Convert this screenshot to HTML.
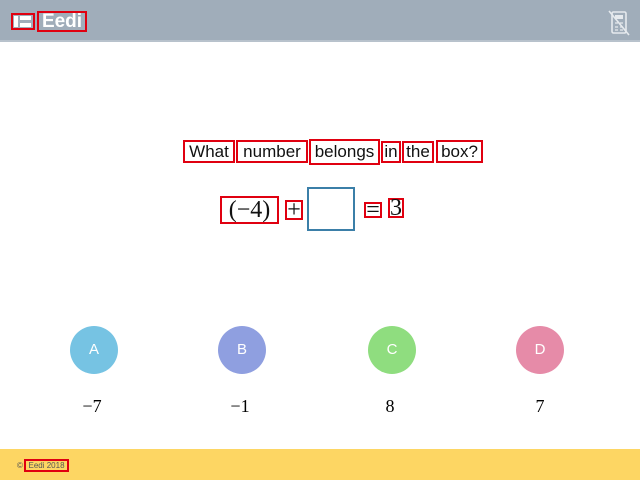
<!DOCTYPE html>
<html><head><meta charset="utf-8"><style>
*{margin:0;padding:0;box-sizing:border-box}
body{width:640px;height:480px;position:relative;background:#fff;overflow:hidden;font-family:"Liberation Sans",sans-serif}
.a{position:absolute}
.r{position:absolute;border:2px solid #e00010;display:flex;align-items:center;justify-content:center;white-space:nowrap;color:#111}
.q{font-family:"Liberation Sans",sans-serif;font-size:17px}
.m{font-family:"Liberation Serif",serif;font-size:24px}
.c{position:absolute;width:48px;height:48px;border-radius:50%;color:#fff;font-size:15px;text-align:center;line-height:48px}
.n{position:absolute;font-family:"Liberation Serif",serif;font-size:18px;width:60px;text-align:center;top:396px}
</style></head><body>
<div class="a" style="left:0;top:0;width:640px;height:42px;background:#a0adba;border-bottom:2px solid #b8c2cc"></div>
<div class="a" style="left:14px;top:16px;width:4px;height:11px;background:#fff"></div>
<div class="a" style="left:20px;top:16px;width:11px;height:4px;background:#fff"></div>
<div class="a" style="left:20px;top:23px;width:11px;height:4px;background:#fff"></div>
<div class="r" style="left:11px;top:13px;width:24px;height:17px"></div>
<div class="r" style="left:37px;top:11px;width:50px;height:21px;color:#fff;font-weight:bold;font-size:19px">Eedi</div>
<svg class="a" style="left:608px;top:10px" width="22" height="26" viewBox="0 0 22 26"><rect x="4" y="2" width="14" height="21" rx="1.5" fill="none" stroke="#e6eaee" stroke-width="1.6"/><rect x="7" y="5" width="8" height="4" fill="#e6eaee"/><path d="M7 13h3M12 13h3M7 17h3M12 17h3M7 20h3M12 20h3" stroke="#e6eaee" stroke-width="1.3"/><path d="M1 1L21 25" stroke="#e6eaee" stroke-width="1.6"/></svg>

<div class="r q" style="left:183px;top:140px;width:52px;height:23px">What</div>
<div class="r q" style="left:236px;top:140px;width:72px;height:23px">number</div>
<div class="r q" style="left:309px;top:139px;width:71px;height:26px">belongs</div>
<div class="r q" style="left:381px;top:141px;width:20px;height:22px">in</div>
<div class="r q" style="left:402px;top:141px;width:32px;height:22px">the</div>
<div class="r q" style="left:436px;top:140px;width:47px;height:23px">box?</div>

<div class="r m" style="left:220px;top:196px;width:59px;height:28px">(−4)</div>
<div class="r m" style="left:285px;top:200px;width:18px;height:20px">+</div>
<div class="a" style="left:307px;top:187px;width:48px;height:44px;border:2px solid #3b7fa8"></div>
<div class="r m" style="left:364px;top:202px;width:18px;height:16px">=</div>
<div class="r m" style="left:388px;top:198px;width:16px;height:20px">3</div>

<div class="c" style="left:70px;top:326px;background:#76c3e3">A</div>
<div class="c" style="left:218px;top:326px;background:#8f9fe0">B</div>
<div class="c" style="left:368px;top:326px;background:#8fdd7f">C</div>
<div class="c" style="left:516px;top:326px;background:#e68ba8">D</div>
<div class="n" style="left:62px">−7</div>
<div class="n" style="left:210px">−1</div>
<div class="n" style="left:360px">8</div>
<div class="n" style="left:510px">7</div>

<div class="a" style="left:0;top:449px;width:640px;height:31px;background:#fdd663"></div>
<div class="a" style="left:17px;top:461px;font-size:8px;color:#555">©</div>
<div class="r" style="left:24px;top:459px;width:45px;height:13px;font-size:8px;color:#555">Eedi 2018</div>
</body></html>
